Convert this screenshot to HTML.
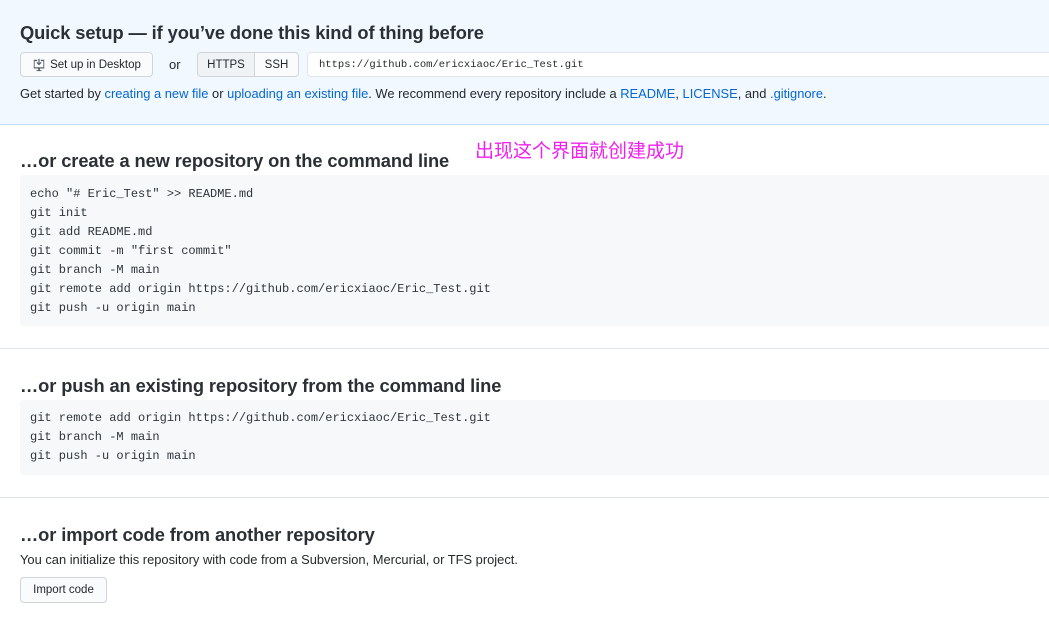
<!DOCTYPE html>
<html><head><meta charset="utf-8"><style>
*{margin:0;padding:0;box-sizing:border-box}
body{width:1049px;height:621px;overflow:hidden;background:#fff;font-family:"Liberation Sans","Noto Sans CJK SC",sans-serif;color:#24292e;position:relative}
.a{position:absolute;white-space:nowrap}
h3{font-size:18.3px;font-weight:bold;letter-spacing:-0.1px;color:#2b3036}
.btn{position:absolute;border:1px solid #d1d5da;border-radius:4px;background:#fafbfc;font-size:11.5px;display:flex;align-items:center;justify-content:center;color:#24292e}
.code{position:absolute;left:20px;right:0;background:#f6f8fa;border-radius:4px 0 0 4px;font-family:"Liberation Mono",monospace;font-size:12px;color:#2f353b;padding-left:10px}
.code div{height:19px;line-height:19px}
.hr{position:absolute;left:0;right:0;height:1px;background:#e1e4e8}
a{color:#0366d6;text-decoration:none}
p{font-size:12.9px}
</style></head><body>
<div class="a" style="left:0;top:0;width:1049px;height:125px;background:#f1f8ff;border-bottom:1px solid #c8e1ff"></div>
<h3 class="a" style="left:20px;top:22px">Quick setup — if you’ve done this kind of thing before</h3>
<div class="btn" style="left:20px;top:52px;width:133px;height:25px;gap:4px">
<svg width="14" height="14" viewBox="0 0 16 16"><path d="M2 2h4v1.5H3v7h10v-7h-3V2h4v10H9v2h2v1H5v-1h2v-2H2z" fill="#586069"/><path d="M8 1v6M5.5 5L8 7.5 10.5 5" stroke="#586069" stroke-width="1.4" fill="none"/></svg>Set up in Desktop</div>
<div class="a" style="left:169px;top:57px;font-size:13px">or</div>
<div class="btn" style="left:197px;top:52px;width:58px;height:25px;background:#eff3f6;border-radius:4px 0 0 4px">HTTPS</div>
<div class="btn" style="left:254px;top:52px;width:45px;height:25px;background:#fafbfc;border-radius:0 4px 4px 0">SSH</div>
<div class="a" style="left:307px;top:52px;width:760px;height:25px;background:#fff;border:1px solid #e1e4e8;border-radius:4px;font-family:'Liberation Mono',monospace;font-size:10.5px;line-height:24px;padding-left:11px">https://github.com/ericxiaoc/Eric_Test.git</div>
<p class="a" style="left:20px;top:86px">Get started by <a>creating a new file</a> or <a>uploading an existing file</a>. We recommend every repository include a <a>README</a>, <a>LICENSE</a>, and <a>.gitignore</a>.</p>

<div class="a" style="left:475px;top:136px;font-size:19px;color:#f020f0;font-family:'Noto Sans CJK SC',sans-serif">出现这个界面就创建成功</div>
<h3 class="a" style="left:20px;top:150px">…or create a new repository on the command line</h3>
<div class="code" style="top:175px;height:151px;padding-top:10px">
<div>echo "# Eric_Test" &gt;&gt; README.md</div><div>git init</div><div>git add README.md</div><div>git commit -m "first commit"</div><div>git branch -M main</div><div>git remote add origin https://github.com/ericxiaoc/Eric_Test.git</div><div>git push -u origin main</div></div>
<div class="hr" style="top:348px"></div>
<h3 class="a" style="left:20px;top:375px">…or push an existing repository from the command line</h3>
<div class="code" style="top:400px;height:75px;padding-top:9px">
<div>git remote add origin https://github.com/ericxiaoc/Eric_Test.git</div><div>git branch -M main</div><div>git push -u origin main</div></div>
<div class="hr" style="top:497px"></div>
<h3 class="a" style="left:20px;top:524px">…or import code from another repository</h3>
<p class="a" style="left:20px;top:552px">You can initialize this repository with code from a Subversion, Mercurial, or TFS project.</p>
<div class="btn" style="left:20px;top:577px;width:87px;height:26px">Import code</div>
</body></html>
